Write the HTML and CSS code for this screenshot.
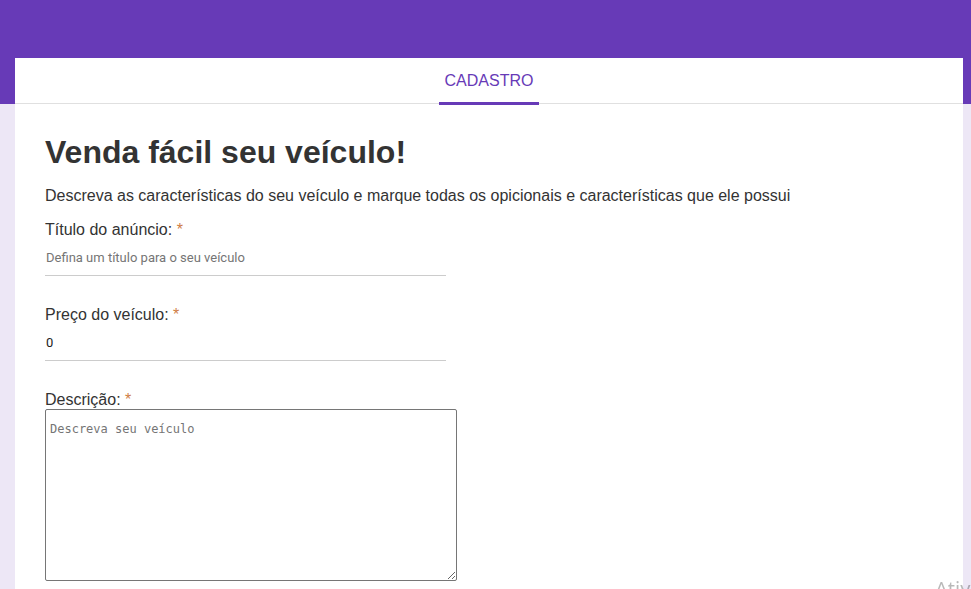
FILE: index.html
```html
<!DOCTYPE html>
<html lang="pt-BR">
<head>
<meta charset="utf-8">
<title>Cadastro</title>
<link rel="stylesheet" href="styles.css">
</head>
<body>
<div class="page">
  <main class="card">
    <nav class="tabs">
      <a class="tab tab-active" href="#">CADASTRO</a>
    </nav>
    <form class="content">
      <h1 class="title">Venda fácil seu veículo!</h1>
      <p class="lead">Descreva as características do seu veículo e marque todas os opicionais e características que ele possui</p>
      <div class="field">
        <label class="label" for="titulo">Título do anúncio: <span class="req">*</span></label>
        <input class="input" id="titulo" type="text" placeholder="Defina um título para o seu veículo">
      </div>
      <div class="field">
        <label class="label" for="preco">Preço do veículo: <span class="req">*</span></label>
        <input class="input" id="preco" type="text" value="0">
      </div>
      <div class="field">
        <label class="label" for="descricao">Descrição: <span class="req">*</span></label>
        <textarea class="textarea" id="descricao" placeholder="Descreva seu veículo"></textarea>
      </div>
    </form>
  </main>
</div>
<div class="watermark">Ativar o Windows</div>
</body>
</html>
```
FILE: styles.css
```css
html {
  overflow: hidden;
}
body {
  margin: 0;
  font-family: "Liberation Sans", Arial, sans-serif;
  color: #333333;
  background: #ede7f6;
}
.page {
  background: linear-gradient(#673ab7 0, #673ab7 104px, #ede7f6 104px);
  padding: 58px 8px 0 15px;
  min-height: 700px;
}
.card {
  background: #ffffff;
  min-height: 640px;
}
.tabs {
  display: flex;
  justify-content: center;
  height: 45px;
  border-bottom: 1px solid #e0e0e0;
}
.tab {
  display: flex;
  align-items: center;
  justify-content: center;
  width: 100px;
  height: 47px;
  box-sizing: border-box;
  padding-top: 1px;
  font-size: 16px;
  color: #673ab7;
  text-decoration: none;
}
.tab-active {
  border-bottom: 3px solid #673ab7;
  position: relative;
  z-index: 1;
}
.content {
  padding: 30px 30px 0 30px;
}
.title {
  margin: 0;
  font-size: 32px;
  font-weight: bold;
  color: #333333;
}
.lead {
  margin: 16px 0 0 0;
  font-size: 16px;
  color: #333333;
}
.field {
  display: flex;
  flex-direction: column;
  align-items: flex-start;
  margin-top: 16px;
}
.field + .field {
  margin-top: 30px;
}
.label {
  font-size: 16px;
  color: #333333;
}
.req {
  color: #cf7d45;
}
.input {
  width: 401px;
  height: 37px;
  box-sizing: border-box;
  border: none;
  border-bottom: 1px solid #cccccc;
  padding: 0 1px;
  margin: 0;
  font-family: "Roboto", "Liberation Sans", sans-serif;
  font-size: 13px;
  color: #222222;
  outline: none;
  background: transparent;
}
.input::placeholder {
  color: #757575;
}
.textarea {
  width: 412px;
  height: 172px;
  box-sizing: border-box;
  margin: 0;
  padding: 12px 4px;
  border: 1px solid #767676;
  border-radius: 2px;
  font-family: "DejaVu Sans Mono", monospace;
  font-size: 12px;
  resize: vertical;
}
.textarea::placeholder {
  color: #757575;
}
.watermark {
  position: fixed;
  left: 935px;
  top: 575px;
  font-family: "Noto Sans", sans-serif;
  font-size: 20px;
  color: rgba(0, 0, 0, 0.28);
  white-space: nowrap;
}
```
